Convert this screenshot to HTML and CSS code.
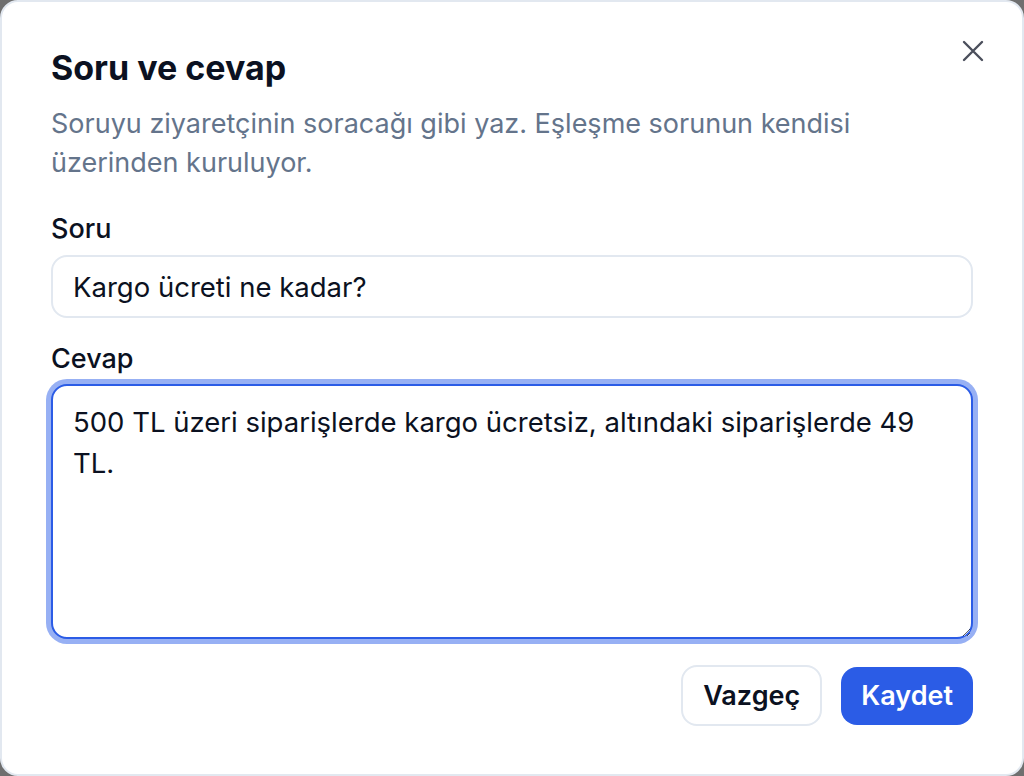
FILE: index.html
```html
<!DOCTYPE html>
<html lang="tr">
<head>
  <meta charset="UTF-8">
  <meta name="viewport" content="width=device-width, initial-scale=1.0">
  <title>Soru ve cevap</title>
  <link rel="stylesheet" href="styles.css">
</head>
<body>
  <div class="dialog">
    <button class="close-btn" aria-label="Kapat">
      <svg width="22" height="22" viewBox="0 0 22 22" fill="none" stroke="currentColor" stroke-width="2.4" stroke-linecap="round">
        <path d="M2 2 L20 20 M20 2 L2 20"/>
      </svg>
    </button>

    <h1>Soru ve cevap</h1>
    <p class="desc">Soruyu ziyaretçinin soracağı gibi yaz. Eşleşme sorunun kendisi üzerinden kuruluyor.</p>

    <label class="field-label label-soru" for="soru">Soru</label>
    <input id="soru" class="field-input" type="text" value="Kargo ücreti ne kadar?">

    <label class="field-label label-cevap" for="cevap">Cevap</label>
    <textarea id="cevap" class="field-textarea focused">500 TL üzeri siparişlerde kargo ücretsiz, altındaki siparişlerde 49 TL.</textarea>

    <div class="actions">
      <button class="btn btn-cancel">Vazgeç</button>
      <button class="btn btn-save">Kaydet</button>
    </div>
  </div>
</body>
</html>
```

FILE: styles.css
```css
* {
  box-sizing: border-box;
}

body {
  margin: 0;
  background-color: #6f6f6f;
  font-family: Inter, "Noto Sans", sans-serif;
}

.dialog {
  position: relative;
  width: 1024px;
  height: 776px;
  background-color: white;
  border: 2px solid #e2e8f0;
  border-radius: 18px;
  padding: 41px 49px 0 49px;
  display: flex;
  flex-direction: column;
}

.close-btn {
  position: absolute;
  top: 38px;
  right: 38px;
  background: none;
  border: none;
  padding: 0;
  color: #4b4f5c;
  cursor: pointer;
  display: flex;
}

h1 {
  margin: 0;
  font-size: 34px;
  line-height: 50px;
  font-weight: 700;
  color: #0b1121;
}

.desc {
  margin: 11px 0 0 0;
  font-size: 27px;
  line-height: 39px;
  color: #64748b;
}

.field-label {
  font-size: 27px;
  line-height: 34px;
  font-weight: 500;
  color: #0b1121;
}

.label-soru {
  margin-top: 30px;
}

.label-cevap {
  margin-top: 24px;
}

.field-input {
  width: 100%;
  height: 63px;
  margin-top: 9px;
  border: 2px solid #e2e8f0;
  border-radius: 16px;
  padding: 0 20px;
  font-family: inherit;
  font-size: 27.5px;
  color: #0b1121;
  outline: none;
}

.field-textarea {
  width: 100%;
  height: 255px;
  margin-top: 8px;
  border: 2px solid #e2e8f0;
  border-radius: 16px;
  padding: 16px 26px 16px 20px;
  font-family: inherit;
  font-size: 27.5px;
  line-height: 41px;
  color: #0b1121;
  resize: vertical;
  outline: none;
}

.field-textarea.focused {
  border-color: #2b5ce6;
  box-shadow: 0 0 0 5px #97b0f4;
}

.actions {
  display: flex;
  justify-content: flex-end;
  align-items: center;
  gap: 19px;
  margin-top: 26px;
}

.btn {
  font-family: inherit;
  font-size: 27px;
  font-weight: 600;
  border-radius: 16px;
  cursor: pointer;
}

.btn-cancel {
  height: 61px;
  padding: 0 20px;
  background-color: white;
  border: 2px solid #e2e8f0;
  color: #0b1121;
}

.btn-save {
  height: 58px;
  padding: 0 20px;
  background-color: #2b5ce6;
  border: none;
  color: white;
}
```
